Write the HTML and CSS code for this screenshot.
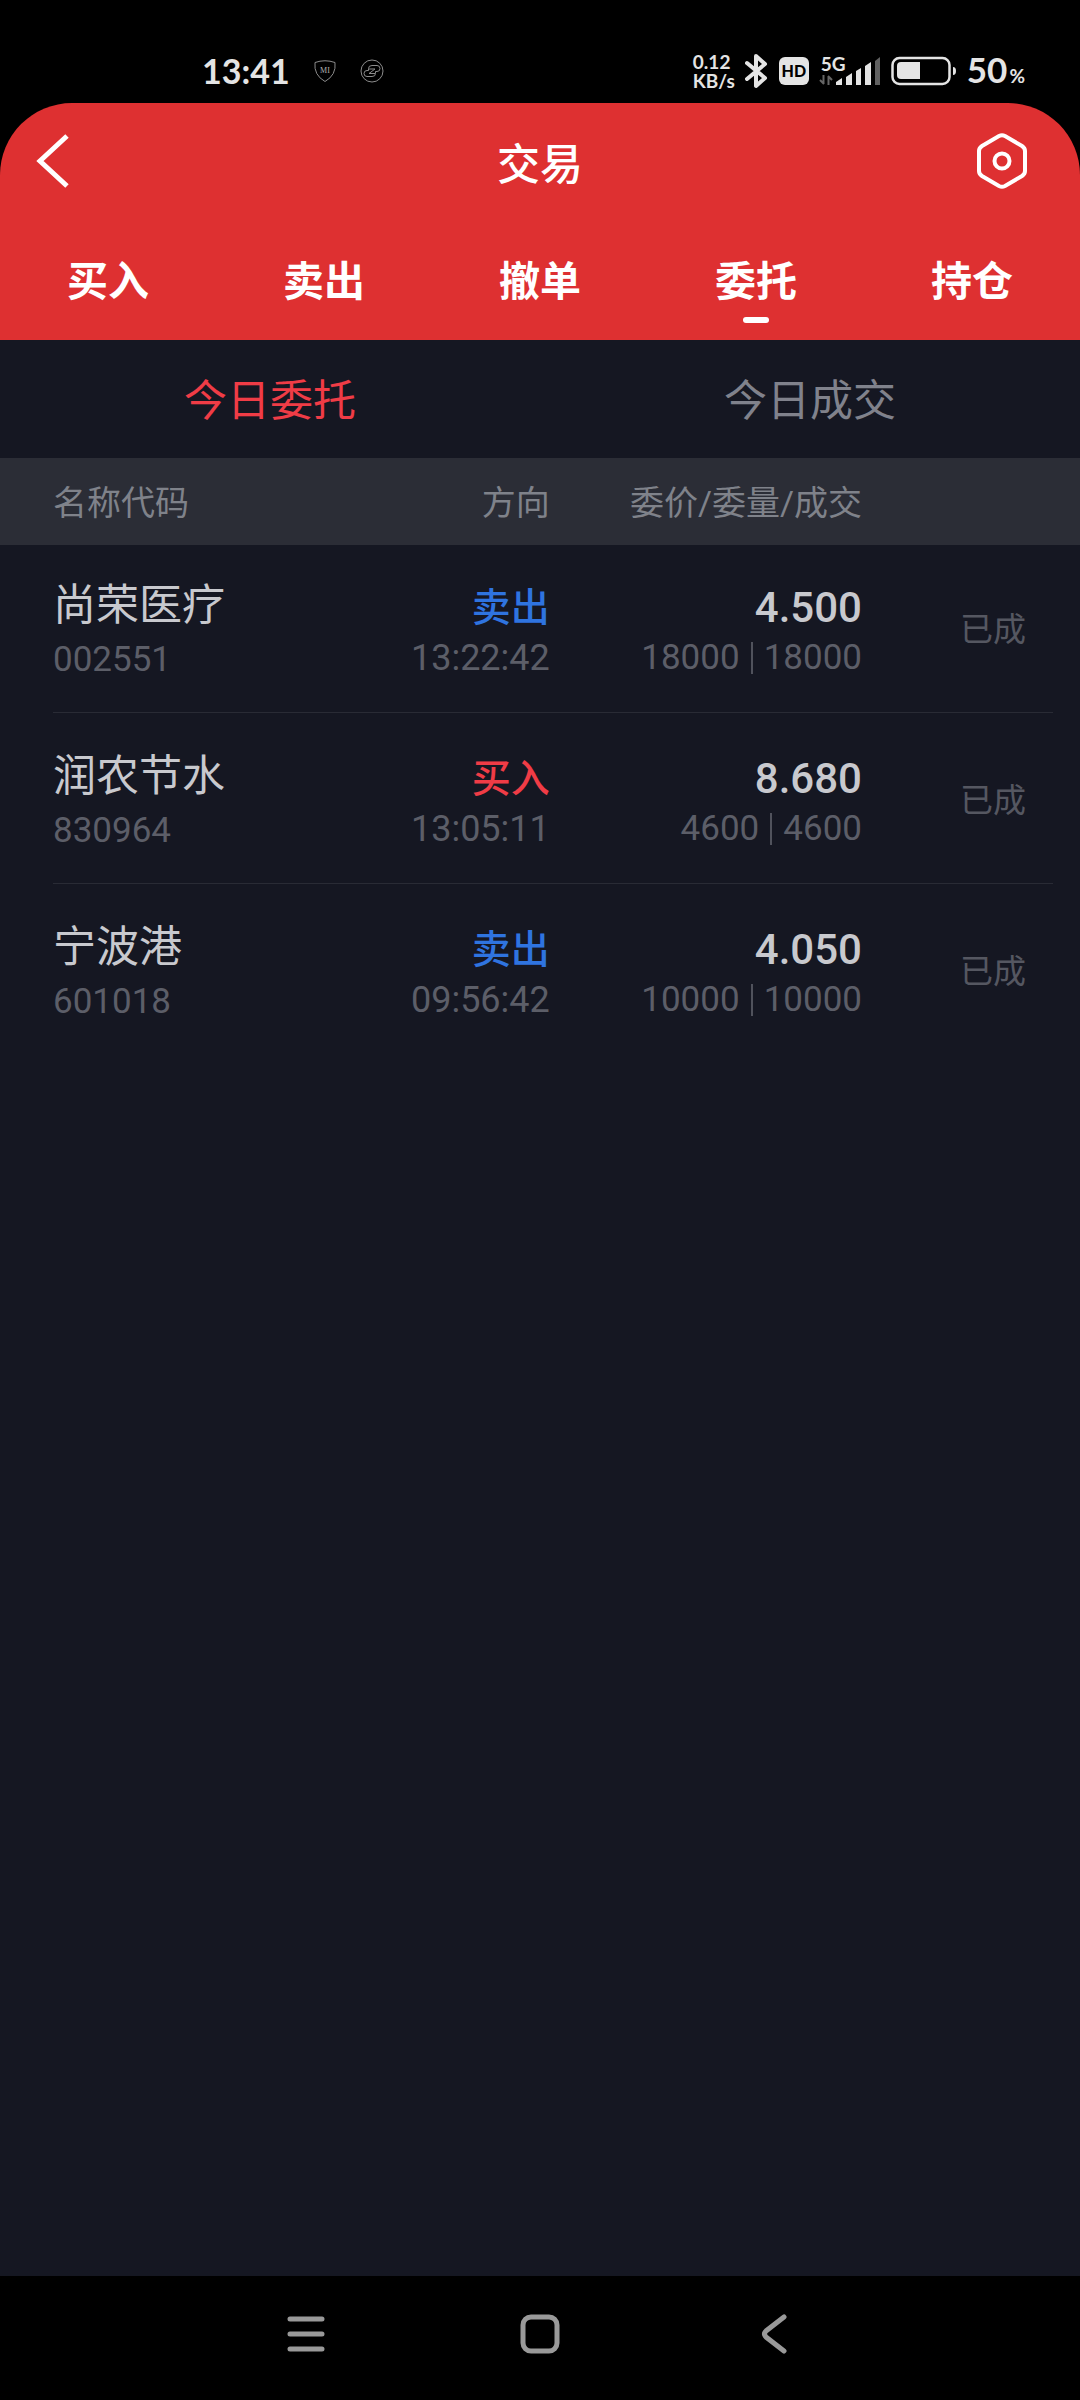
FILE: index.html
```html
<!DOCTYPE html>
<html lang="zh-CN">
<head>
    <meta charset="UTF-8">
    <meta name="viewport" content="width=device-width, initial-scale=1.0">
    <title>交易</title>
    <link rel="stylesheet" href="styles.css">
</head>
<body>

<div class="status-bar">
    <div class="status-left">
        <span class="clock">13:41</span>
        <svg class="notice" width="24" height="24" viewBox="0 0 24 24">
            <path d="M2 3.500Q12 0 22 3.500Q23.500 16 12 22.500Q.5 16 2 3.500Z"/>
            <text x="12" y="14" text-anchor="middle">MI</text>
        </svg>
        <svg class="notice" width="24" height="24" viewBox="0 0 24 24">
            <circle cx="12" cy="12" r="11"/>
            <path d="M8 17.500H7A3 3 0 0 1 7 11.500H8.500M16 6.500H17A3 3 0 0 1 17 12.500H15.500M8.500 11.500V9.500Q8.500 6.500 12 6.500H16M15.500 12.500V14.500Q15.500 17.500 12 17.500H8M9 10H15L9 14.500H15"/>
        </svg>
    </div>
    <div class="status-right">
        <div class="speed"><span>0.12</span><span>KB/s</span></div>
        <svg width="24" height="36" viewBox="0 0 24 36">
            <path d="M2 10L20 25L11 33V3L20 11L2 26" fill="none" stroke="#e4e4e4" stroke-width="4" stroke-linejoin="round" stroke-linecap="round"/>
        </svg>
        <span class="hd">HD</span>
        <div class="signal">
            <span>5G</span>
            <svg width="62" height="30" viewBox="0 0 62 30">
                <path d="M4.500 19V28M5 28L1 24M9.500 29V20M9 20L13 24" fill="none" stroke="#666" stroke-width="2"/>
                <path d="M17 29V26L23 22V29ZM27 29V21L33 17V29ZM37 29V15L42 12V29ZM46 29V10L52 6V29Z" fill="#e4e4e4"/>
                <path d="M56 29V5L61 1V29Z" fill="#606060"/>
            </svg>
        </div>
        <svg width="66" height="30" viewBox="0 0 66 30">
            <rect x="1.500" y="2" width="57" height="26" rx="7" fill="none" stroke="#e4e4e4" stroke-width="2.500"/>
            <path d="M10 6H29V23H10A4 4 0 0 1 6 19V10A4 4 0 0 1 10 6Z" fill="#e4e4e4"/>
            <path d="M62 11Q65 11 65 15T62 19Z" fill="#e4e4e4"/>
        </svg>
        <span class="battery">50<small>%</small></span>
    </div>
</div>

<header class="header">
    <div class="title-bar">
        <button class="icon-button" aria-label="返回">
            <svg width="34" height="56" viewBox="0 0 34 56">
                <path d="M31 3L4 28L31 53" fill="none" stroke="#fff" stroke-width="5"/>
            </svg>
        </button>
        <h1>交易</h1>
        <button class="icon-button settings" aria-label="设置">
            <svg width="52" height="56" viewBox="0 0 52 56" fill="none" stroke="#fff" stroke-width="4">
                <path d="M23 3Q26 1.500 29 3L46 13Q49 15 49 18V38Q49 41 46 43L29 53Q26 54.500 23 53L6 43Q3 41 3 38V18Q3 15 6 13Z"/>
                <circle cx="26" cy="28" r="7.500"/>
            </svg>
        </button>
    </div>
    <nav class="tabs">
        <a href="#">买入</a>
        <a href="#">卖出</a>
        <a href="#">撤单</a>
        <a href="#" class="active">委托</a>
        <a href="#">持仓</a>
    </nav>
</header>

<main class="content">
    <div class="switch">
        <button class="active">今日委托</button>
        <button>今日成交</button>
    </div>

    <table class="orders">
        <thead>
            <tr>
                <th class="col-name">名称代码</th>
                <th class="col-side">方向</th>
                <th class="col-price">委价/委量/成交</th>
                <th class="col-state"></th>
            </tr>
        </thead>
        <tbody>
            <tr>
                <td class="col-name"><div class="name">尚荣医疗</div><div class="code">002551</div></td>
                <td class="col-side"><div class="side sell">卖出</div><div class="time">13:22:42</div></td>
                <td class="col-price"><div class="price">4.500</div><div class="amount"><span>18000</span><span class="deal">18000</span></div></td>
                <td class="col-state">已成</td>
            </tr>
            <tr>
                <td class="col-name"><div class="name">润农节水</div><div class="code">830964</div></td>
                <td class="col-side"><div class="side buy">买入</div><div class="time">13:05:11</div></td>
                <td class="col-price"><div class="price">8.680</div><div class="amount"><span>4600</span><span class="deal">4600</span></div></td>
                <td class="col-state">已成</td>
            </tr>
            <tr>
                <td class="col-name"><div class="name">宁波港</div><div class="code">601018</div></td>
                <td class="col-side"><div class="side sell">卖出</div><div class="time">09:56:42</div></td>
                <td class="col-price"><div class="price">4.050</div><div class="amount"><span>10000</span><span class="deal">10000</span></div></td>
                <td class="col-state">已成</td>
            </tr>
        </tbody>
    </table>
</main>

<div class="system-nav">
    <button aria-label="最近任务">
        <svg width="38" height="40" viewBox="0 0 38 40">
            <path d="M3 5H35M3 20H35M3 35H35"/>
        </svg>
    </button>
    <button aria-label="主屏幕">
        <svg width="40" height="40" viewBox="0 0 40 40">
            <rect x="3" y="3" width="34" height="34" rx="8"/>
        </svg>
    </button>
    <button aria-label="返回上一级">
        <svg width="26" height="40" viewBox="0 0 26 40">
            <path d="M23 3L5 17Q2 20 5 23L23 37"/>
        </svg>
    </button>
</div>

</body>
</html>
```
FILE: styles.css
```css
* {
    box-sizing: border-box;
}

body {
    display: flex;
    flex-direction: column;
    min-height: 100vh;
    margin: 0;
    background-color: #000;
    color: #c8c9ce;
    font-family: Roboto, "Noto Sans CJK SC", sans-serif;
}

button {
    margin: 0;
    padding: 0;
    border: none;
    background: none;
    color: inherit;
    font-family: inherit;
    cursor: pointer;
}

svg {
    display: block;
}

/* status bar */
.status-bar {
    display: flex;
    justify-content: space-between;
    align-items: center;
    height: 103px;
    padding: 39px 55px 0 202px;
    color: #e4e4e4;
    font-family: Lato, sans-serif;
    font-weight: bold;
}

.status-left {
    display: flex;
    align-items: center;
    gap: 23px;
}

.status-right {
    display: flex;
    align-items: center;
    gap: 10px;
}

.clock {
    font-size: 34px;
    line-height: 40px;
}

.notice {
    fill: none;
    stroke: #8c8c8c;
    stroke-width: 1;
}

.notice text {
    fill: #b0b0b0;
    stroke: none;
    font: 8px "Liberation Serif", serif;
}

.speed {
    display: flex;
    flex-direction: column;
    font-size: 19px;
    line-height: 19px;
}

.hd {
    width: 30px;
    border-radius: 6px;
    background-color: #e4e4e4;
    color: #000;
    font-size: 16px;
    line-height: 28px;
    font-weight: 900;
    text-align: center;
}

.signal {
    position: relative;
}

.signal span {
    position: absolute;
    top: 0;
    left: 2px;
    font-size: 19px;
    line-height: 16px;
}

.battery {
    padding-top: 2px;
    font-size: 35px;
    line-height: 40px;
}

.battery small {
    margin-left: 2px;
    font-size: 19px;
}

/* header */
.header {
    border-radius: 72px 72px 0 0;
    background-color: #de3031;
    color: #fff;
}

.title-bar {
    display: flex;
    justify-content: space-between;
    align-items: center;
    height: 115px;
    padding: 0 36px;
}

.title-bar h1 {
    margin: 0;
    font-size: 43px;
    font-weight: 500;
}

.icon-button {
    display: flex;
    width: 68px;
}

.settings {
    padding-right: 16px;
}

.tabs {
    display: flex;
    height: 122px;
}

.tabs a {
    position: relative;
    flex: 1;
    padding-top: 6px;
    color: #fff;
    font-size: 41px;
    line-height: 116px;
    font-weight: 700;
    text-align: center;
    text-decoration: none;
}

.tabs .active::after {
    content: "";
    position: absolute;
    bottom: 17px;
    left: 50%;
    width: 26px;
    height: 6px;
    margin-left: -13px;
    border-radius: 3px;
    background-color: #fff;
}

/* content */
.content {
    flex: 1;
    background-color: #151722;
}

.switch {
    display: flex;
    height: 118px;
}

.switch button {
    flex: 1;
    padding-bottom: 4px;
    color: #80828c;
    font-size: 43px;
}

.switch .active {
    color: #f03c46;
}

.orders {
    width: 100%;
    border-collapse: collapse;
    table-layout: fixed;
}

.orders th {
    height: 87px;
    padding: 0 0 2px;
    background-color: #2b2d36;
    color: #7f828a;
    font-size: 34px;
    font-weight: 400;
}

.orders td {
    height: 171px;
    padding: 9px 0 0;
}

.orders tbody tr:first-child td {
    height: 168px;
    padding-top: 5px;
}

/* divider line, inset on both sides */
.orders tbody tr:not(:last-child) {
    background: linear-gradient(#292b35, #292b35) no-repeat right 27px bottom / calc(100% - 80px) 1px;
}

.orders .col-name {
    width: 26%;
    padding-left: 53px;
    text-align: left;
}

.orders .col-side {
    width: 25%;
    padding-right: 1px;
    text-align: right;
}

.orders .col-price {
    width: 29%;
    padding-right: 2px;
    text-align: right;
}

.orders .col-state {
    width: 20%;
    padding-right: 54px;
    padding-bottom: 10px;
    color: #555761;
    font-size: 33px;
    text-align: right;
}

.name {
    font-size: 43px;
    line-height: 56px;
}

.code,
.time,
.amount {
    color: #5c5e68;
    font-size: 35px;
    line-height: 50px;
}

.code {
    line-height: 54px;
}

.time {
    font-size: 36px;
}

.side {
    padding-top: 2px;
    font-size: 39px;
    line-height: 50px;
    font-weight: 500;
}

.sell {
    color: #2f74e0;
}

.buy {
    color: #f03c46;
}

.price {
    padding-top: 2px;
    font-size: 42px;
    line-height: 50px;
    font-weight: 500;
}

.deal {
    display: inline-block;
    margin-left: 11px;
    padding-left: 11px;
    border-left: 2px solid #50525c;
    line-height: 32px;
}

/* system navigation */
.system-nav {
    display: flex;
    justify-content: center;
    height: 124px;
    padding-bottom: 8px;
}

.system-nav button {
    display: flex;
    justify-content: center;
    align-items: center;
    width: 234px;
}

.system-nav svg {
    fill: none;
    stroke: #999;
    stroke-width: 5;
    stroke-linecap: round;
}
```
